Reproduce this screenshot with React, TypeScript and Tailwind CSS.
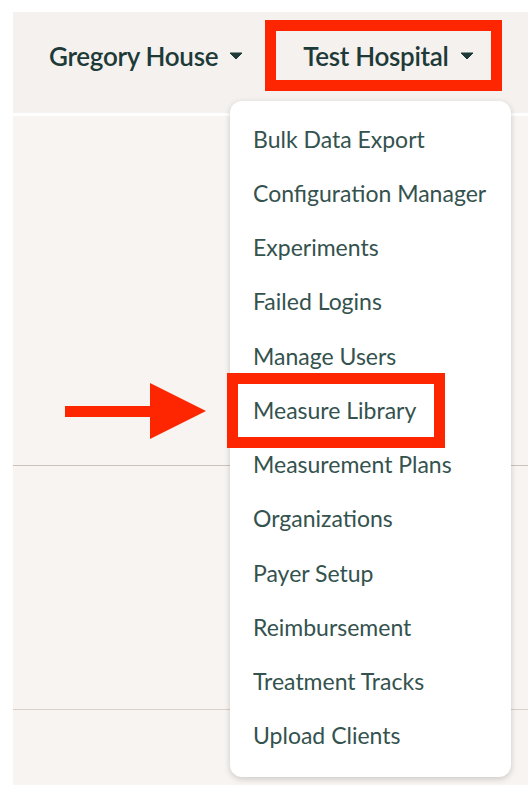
import React from "react";

const items = [
  "Bulk Data Export",
  "Configuration Manager",
  "Experiments",
  "Failed Logins",
  "Manage Users",
  "Measure Library",
  "Measurement Plans",
  "Organizations",
  "Payer Setup",
  "Reimbursement",
  "Treatment Tracks",
  "Upload Clients",
];

function Caret() {
  return (
    <svg width="14" height="8" viewBox="0 0 14 8" className="shrink-0">
      <path d="M1 1 L13 1 L7 7 Z" fill="#1d3a38" stroke="#1d3a38" strokeWidth="1" strokeLinejoin="round" />
    </svg>
  );
}

export default function App() {
  return (
    <div
      className="relative w-[528px] h-[792px] overflow-hidden bg-white"
      style={{ fontFamily: "Lato, 'Open Sans', sans-serif" }}
    >
      <div className="ml-[13px] mt-[12px] w-[515px] h-[773px] flex flex-col">
        <header className="h-[101px] shrink-0 bg-[#f4f1ee] flex items-start pt-[25px] pl-[36px] gap-[60px] text-[#1d3a38]">
          <div className="flex items-center gap-[11px]">
            <span className="text-[26px] font-semibold tracking-[-0.3px] leading-[38px]">Gregory House</span>
            <Caret />
          </div>
          <div className="flex items-center gap-[11px]">
            <span className="text-[26px] font-semibold tracking-[-0.3px] leading-[38px]">Test Hospital</span>
            <Caret />
          </div>
        </header>
        <div className="h-[3px] bg-white shrink-0" />
        <div className="flex-1 bg-[#f7f4f1] flex flex-col">
          <div className="h-[349px]" />
          <div className="h-px bg-[#cbc2ba]" />
          <div className="h-[243px]" />
          <div className="h-px bg-[#d9cfc6]" />
          <div className="flex-1" />
        </div>
      </div>

      {/* dropdown menu */}
      <div className="absolute left-[230px] top-[101px] w-[281px] h-[676px] rounded-[12px] bg-white shadow-[0_2px_6px_rgba(0,0,0,0.18)] pt-[11px] pb-[14px] flex flex-col">
        {items.map((t) => (
          <div
            key={t}
            className="h-[54.27px] flex items-center pl-[23px] text-[23px] text-[#34524e] leading-none whitespace-nowrap"
          >
            {t}
          </div>
        ))}
      </div>

      {/* annotation: box around Test Hospital */}
      <div className="absolute left-[265px] top-[20px] w-[237px] h-[71px] border-[11px] border-[#fe2600]" />
      {/* annotation: box around Measure Library */}
      <div className="absolute left-[227px] top-[373px] w-[218px] h-[75px] border-[11px] border-[#fe2600]" />
      {/* annotation: arrow */}
      <svg className="absolute left-0 top-0" width="528" height="792" viewBox="0 0 528 792">
        <rect x="65" y="406" width="90" height="11" fill="#fe2600" />
        <polygon points="150,383 206,411 150,439" fill="#fe2600" />
      </svg>
    </div>
  );
}
